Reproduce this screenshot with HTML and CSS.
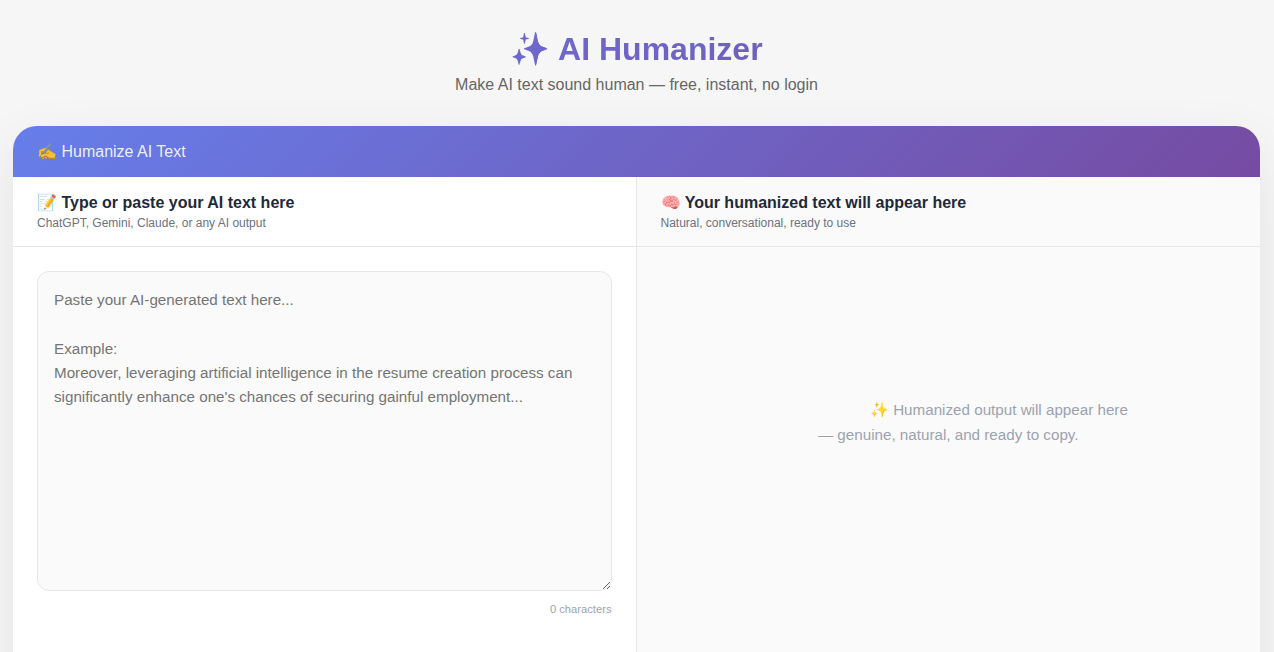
FILE: index.html
```html
<!DOCTYPE html>
<html lang="en">
<head>
    <meta charset="UTF-8">
    <title>AI Humanizer</title>
    <link rel="stylesheet" href="styles.css">
</head>
<body>
<header class="header">
    <h1 class="logo">✨ AI Humanizer</h1>
    <p class="tagline">Make AI text sound human — free, instant, no login</p>
</header>
<main class="tool">
    <div class="tool-header">✍️ Humanize AI Text</div>
    <div class="panels">
        <section class="panel">
            <div class="panel-header">
                <h2>📝 Type or paste your AI text here</h2>
                <p>ChatGPT, Gemini, Claude, or any AI output</p>
            </div>
            <div class="panel-body">
                <textarea class="input-area" id="inputText" placeholder="Paste your AI-generated text here...

Example:
Moreover, leveraging artificial intelligence in the resume creation process can significantly enhance one's chances of securing gainful employment..."></textarea>
                <div class="char-count" id="charCount">0 characters</div>
            </div>
        </section>
        <section class="panel panel-output">
            <div class="panel-header">
                <h2>🧠 Your humanized text will appear here</h2>
                <p>Natural, conversational, ready to use</p>
            </div>
            <div class="panel-body">
                <div class="output-area">                        ✨ Humanized output will appear here
— genuine, natural, and ready to copy.</div>
            </div>
        </section>
    </div>
</main>
<script>
  const inputText = document.getElementById('inputText')
  const charCount = document.getElementById('charCount')

  inputText.addEventListener('input', function () {
    charCount.textContent = inputText.value.length + ' characters'
  })
</script>
</body>
</html>
```
FILE: styles.css
```css
* {
    margin: 0;
    padding: 0;
    box-sizing: border-box;
}

body {
    height: 652px;
    padding-right: 1px;
    overflow: hidden;
    font-family: "Liberation Sans", Arial, sans-serif;
    line-height: 1.6;
    color: #1f2937;
    background: #f6f6f6;
}

.header {
    padding: 30px 0 28px;
    text-align: center;
}

.logo {
    font-size: 32px;
    line-height: 38px;
    background: linear-gradient(135deg, #667eea 0%, #764ba2 100%);
    -webkit-background-clip: text;
    background-clip: text;
    color: transparent;
}

.tagline {
    margin-top: 4px;
    font-size: 16px;
    color: #666;
}

.tool {
    width: 1247px;
    margin: 0 auto;
    overflow: hidden;
    border-radius: 24px;
    background: #fff;
    box-shadow: 0 20px 60px rgba(0, 0, 0, .08);
}

.tool-header {
    height: 51px;
    padding: 0 24px;
    line-height: 51px;
    color: rgba(255, 255, 255, .9);
    background: linear-gradient(135deg, #667eea 0%, #764ba2 100%);
}

.panels {
    display: grid;
    grid-template-columns: 1fr 1fr;
    height: 560px;
}

.panel {
    display: flex;
    flex-direction: column;
}

.panel:first-child {
    border-right: 1px solid #e5e7eb;
}

.panel-output {
    background: #fafafa;
}

.panel-header {
    height: 70px;
    padding: 16px 24px 0;
    border-bottom: 1px solid #e5e7eb;
}

.panel-header h2 {
    font-size: 16px;
    line-height: 19px;
}

.panel-header p {
    margin-top: 2px;
    font-size: 12px;
    line-height: 19px;
    color: #6b7280;
}

.panel-body {
    padding: 24px;
}

.input-area {
    display: block;
    width: 100%;
    height: 320px;
    padding: 16.35px 16px 16px;
    border: 1px solid #e5e7eb;
    border-radius: 12px;
    font-family: inherit;
    font-size: 15.2px;
    line-height: 1.6;
    background: #fafafa;
    resize: vertical;
}

.char-count {
    margin-top: 10px;
    font-size: 11.2px;
    text-align: right;
    color: #9ca3af;
}

.output-area {
    display: flex;
    align-items: center;
    justify-content: center;
    height: 302px;
    font-size: 15.2px;
    line-height: 25px;
    text-align: center;
    white-space: pre-wrap;
    color: #9ca3af;
}
```
